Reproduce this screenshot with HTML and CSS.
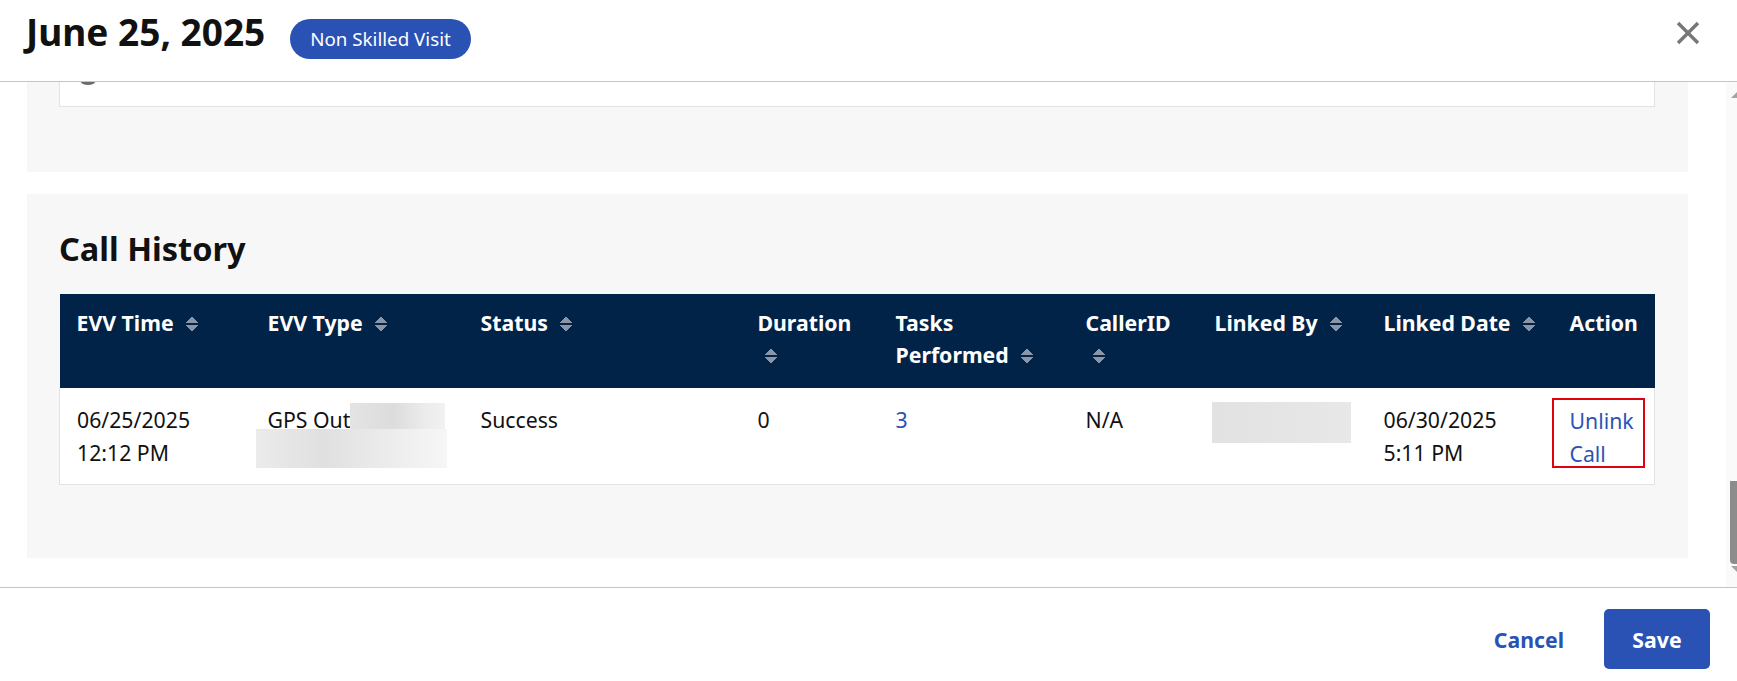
FILE: index.html
```html
<!DOCTYPE html>
<html lang="en">
<head>
<meta charset="utf-8">
<title>Visit</title>
<link rel="stylesheet" href="styles.css">
</head>
<body>
<div class="modal">
  <header class="modal-header">
    <h1 class="title">June 25, 2025</h1>
    <span class="badge">Non Skilled Visit</span>
    <button class="close" aria-label="Close">
      <svg viewBox="0 0 24 24" width="24" height="24"><path d="M2 2L22 22M22 2L2 22" stroke="#777" stroke-width="3.4" fill="none"/></svg>
    </button>
  </header>
  <div class="modal-body">
    <div class="scroll-content">
      <section class="panel panel-top">
        <div class="inner-box"><span class="cut-icon"></span></div>
      </section>
      <section class="panel panel-history">
        <h2 class="section-title">Call History</h2>
        <table class="grid">
          <colgroup>
            <col class="c1"><col class="c2"><col class="c3"><col class="c4"><col class="c5"><col class="c6"><col class="c7"><col class="c8"><col class="c9">
          </colgroup>
          <thead>
            <tr>
              <th>EVV Time <span class="sort"></span></th>
              <th>EVV Type <span class="sort"></span></th>
              <th>Status <span class="sort"></span></th>
              <th>Duration <span class="sort"></span></th>
              <th>Tasks Performed <span class="sort"></span></th>
              <th>CallerID <span class="sort"></span></th>
              <th>Linked By <span class="sort"></span></th>
              <th>Linked Date <span class="sort"></span></th>
              <th>Action</th>
            </tr>
          </thead>
          <tbody>
            <tr>
              <td>06/25/2025<br>12:12 PM</td>
              <td>GPS Out<span class="blur blur-a"></span><span class="blur blur-b"></span></td>
              <td>Success</td>
              <td>0</td>
              <td><a class="link" href="#">3</a></td>
              <td>N/A</td>
              <td><span class="blur blur-c"></span></td>
              <td>06/30/2025<br>5:11 PM</td>
              <td class="action"><div class="highlight"><a class="link" href="#">Unlink Call</a></div></td>
            </tr>
          </tbody>
        </table>
      </section>
    </div>
    <div class="scrollbar">
      <span class="arrow-up"></span>
      <span class="track-space"></span>
      <span class="thumb"></span>
      <span class="arrow-down"></span>
    </div>
  </div>
  <footer class="modal-footer">
    <button class="btn-cancel">Cancel</button>
    <button class="btn-save">Save</button>
  </footer>
</div>
</body>
</html>
```
FILE: styles.css
```css
* { box-sizing: border-box; }
html, body { margin: 0; padding: 0; }
body {
  font-family: "Noto Sans", "Open Sans", sans-serif;
  color: #111;
  background: #fff;
  overflow: hidden;
}
.modal {
  height: 681px;
  display: flex;
  flex-direction: column;
}
.modal-header {
  height: 82px;
  flex: none;
  border-bottom: 1px solid #c4c4c4;
  display: flex;
  align-items: baseline;
  padding: 8px 37px 0 26px;
}
.title {
  margin: 0;
  font-size: 37px;
  line-height: 48px;
  font-weight: 700;
  color: #111;
}
.badge {
  margin-left: 25px;
  height: 40px;
  line-height: 40px;
  padding: 0 20px;
  border-radius: 20px;
  background: #2a52b5;
  color: #fff;
  font-size: 18.75px;
  white-space: nowrap;
}
.close {
  margin-left: auto;
  align-self: flex-start;
  margin-top: 13px;
  width: 24px;
  height: 24px;
  padding: 0;
  border: 0;
  background: none;
  display: block;
}
.close svg { display: block; }
.modal-body {
  flex: 1;
  display: flex;
  min-height: 0;
}
.scroll-content {
  flex: 1;
  padding: 0 38px 0 27px;
}
.panel {
  background: #f7f7f7;
}
.panel-top {
  padding: 0 33px 65px 32px;
}
.inner-box {
  height: 25px;
  background: #fff;
  border: 1px solid #e3e3e3;
  border-top: 0;
}
.cut-icon {
  display: block;
  margin-left: 21px;
  width: 14px;
  height: 3px;
  background: #6b6b6b;
  border-radius: 0 0 7px 7px / 0 0 3px 3px;
}
.panel-history {
  margin-top: 22px;
  padding: 33px 33px 73px 32px;
}
.section-title {
  margin: 0 0 23px;
  font-size: 32.5px;
  line-height: 44px;
  font-weight: 700;
  color: #111;
}
.grid {
  width: 100%;
  border-collapse: collapse;
  table-layout: fixed;
  font-size: 21.25px;
}
.c1 { width: 191px; }
.c2 { width: 213px; }
.c3 { width: 277px; }
.c4 { width: 138px; }
.c5 { width: 190px; }
.c6 { width: 129px; }
.c7 { width: 169px; }
.c8 { width: 186px; }
.grid th {
  background: #012348;
  color: #fff;
  font-weight: 700;
  text-align: left;
  vertical-align: top;
  line-height: 32px;
  padding: 13px 8px 17px 17px;
}
.sort {
  display: inline-block;
  width: 12px;
  height: 16px;
  margin-left: 7px;
  vertical-align: -1px;
  background:
    linear-gradient(to top left, #8b95a5 50%, transparent 50%) 0 0 / 6px 7px no-repeat,
    linear-gradient(to top right, #8b95a5 50%, transparent 50%) 6px 0 / 6px 7px no-repeat,
    linear-gradient(to bottom left, #8b95a5 50%, transparent 50%) 0 9px / 6px 7px no-repeat,
    linear-gradient(to bottom right, #8b95a5 50%, transparent 50%) 6px 9px / 6px 7px no-repeat;
}
.grid td {
  background: #fff;
  vertical-align: top;
  line-height: 33px;
  padding: 15px 8px 15px 17px;
  border-bottom: 1px solid #e3e3e3;
  color: #111;
}
.grid td:first-child { border-left: 1px solid #e3e3e3; }
.grid td:last-child { border-right: 1px solid #e3e3e3; }
.link {
  color: #2b53b6;
  text-decoration: none;
}
.blur { display: inline-block; vertical-align: top; }
.blur-a {
  width: 95px;
  height: 26px;
  margin-top: 0;
  background: linear-gradient(90deg, #e4e4e4, #dcdcdc 45%, #ececec 80%, #f1f1f1);
}
.blur-b {
  display: block;
  margin: -7px 0 0 -12px;
  width: 191px;
  height: 39px;
  background: linear-gradient(90deg, #ebebeb, #e0e0e0 35%, #eeeeee 75%, #f6f6f6);
}
.blur-c {
  display: block;
  margin: -1px 0 0 -3px;
  width: 139px;
  height: 41px;
  background: linear-gradient(90deg, #e2e2e2, #e5e5e5 60%, #e8e8e8);
}
.grid td.action { padding-left: 0; }
.highlight {
  margin: -5px 0 0 -1px;
  width: 93px;
  height: 70px;
  border: 2px solid #e00010;
  padding: 4px 0 0 16px;
  line-height: 33px;
}
.scrollbar {
  width: 11px;
  flex: none;
  background: #fafafa;
  overflow: hidden;
  display: flex;
  flex-direction: column;
  padding: 10px 0 15px;
}
.arrow-up {
  display: block;
  width: 0;
  height: 0;
  margin-left: 5px;
  border-left: 6px solid transparent;
  border-right: 6px solid transparent;
  border-bottom: 6px solid #a3a3a3;
}
.track-space { flex: 1; }
.thumb {
  display: block;
  margin-left: 4px;
  width: 12px;
  height: 83px;
  background: #8c8c8c;
  border-radius: 0 0 0 4px;
}
.arrow-down {
  display: block;
  width: 0;
  height: 0;
  margin: 2px 0 0 5px;
  border-left: 6px solid transparent;
  border-right: 6px solid transparent;
  border-top: 6px solid #a3a3a3;
}
.modal-footer {
  flex: none;
  height: 94px;
  border-top: 1px solid #c4c4c4;
  display: flex;
  justify-content: flex-end;
  align-items: center;
  padding: 21px 27px 12px 0;
}
.btn-cancel {
  font-family: inherit;
  font-size: 21.25px;
  font-weight: 700;
  color: #2a52b5;
  background: none;
  border: 0;
  padding: 0;
  margin-right: 40px;
}
.btn-save {
  font-family: inherit;
  font-size: 21.25px;
  font-weight: 700;
  color: #fff;
  background: #2a52b5;
  border: 0;
  border-radius: 5px;
  width: 106px;
  height: 60px;
  padding: 0;
}
```
